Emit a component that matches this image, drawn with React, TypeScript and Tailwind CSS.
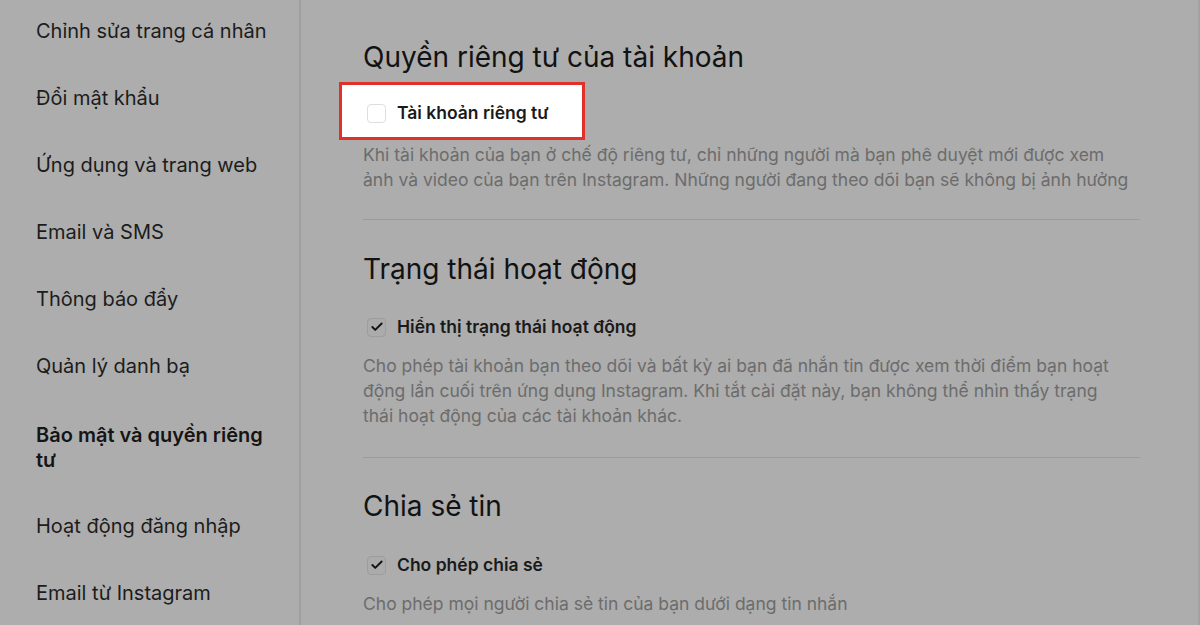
import { Check } from "lucide-react";

const menuItems = [
  { label: "Chỉnh sửa trang cá nhân" },
  { label: "Đổi mật khẩu" },
  { label: "Ứng dụng và trang web" },
  { label: "Email và SMS" },
  { label: "Thông báo đẩy" },
  { label: "Quản lý danh bạ" },
  { label: "Bảo mật và quyền riêng tư", active: true },
  { label: "Hoạt động đăng nhập" },
  { label: "Email từ Instagram" },
];

const Checkbox = ({ checked }: { checked: boolean }) => (
  <span
    className={
      checked
        ? "w-[19px] h-[19px] rounded-[4px] border border-[#9d9d9d] bg-[#ababab] flex items-center justify-center"
        : "w-[19px] h-[19px] rounded-[4px] border border-[#dedede] bg-white flex items-center justify-center"
    }
  >
    {checked && <Check className="w-[14px] h-[14px] text-[#111]" strokeWidth={3.2} />}
  </span>
);

const App = () => {
  return (
    <div className="w-[1200px] h-[625px] overflow-hidden flex bg-[#adadad] font-['Inter','Noto_Sans',sans-serif]">
      <aside className="w-[301px] shrink-0 border-r-2 border-[#9f9f9f] pl-9 pr-6 pt-[19px]">
        <ul className="flex flex-col">
          {menuItems.map((item) => (
            <li
              key={item.label}
              className={
                item.active
                  ? "text-[20px] leading-[25px] text-[#151515] font-semibold w-[240px] h-[93px] pt-[2px]"
                  : "text-[20px] leading-[25px] text-[#1c1c1c] w-[240px] h-[67px]"
              }
            >
              {item.label}
            </li>
          ))}
        </ul>
      </aside>

      <main className="flex-1 border-r-2 border-[#a2a2a2] pl-[62px] pr-[58px] pt-[38px]">
        <h2 className="text-[28px] leading-[38px] text-[#121212]">Quyền riêng tư của tài khoản</h2>
        <div className="-ml-[24px] mt-[6px] w-[246px] h-[58px] border-[3px] border-[#e0302a] bg-white flex items-center gap-[11px] pl-[25px] pt-[5px]">
          <Checkbox checked={false} />
          <span className="text-[17.5px] font-semibold text-[#1a1a1a]">Tài khoản riêng tư</span>
        </div>
        <p className="mt-[2px] text-[17.5px] leading-[25px] text-[#6c6c6c] whitespace-nowrap">
          Khi tài khoản của bạn ở chế độ riêng tư, chỉ những người mà bạn phê duyệt mới được xem
          <br />
          ảnh và video của bạn trên Instagram. Những người đang theo dõi bạn sẽ không bị ảnh hưởng
        </p>
        <hr className="mt-[27px] border-t border-[#9b9b9b]" />

        <h2 className="mt-[30px] text-[28px] leading-[38px] text-[#121212]">Trạng thái hoạt động</h2>
        <label className="mt-[26px] flex items-center gap-[11px] pl-[4px]">
          <Checkbox checked />
          <span className="text-[17.5px] font-semibold text-[#1a1a1a]">Hiển thị trạng thái hoạt động</span>
        </label>
        <p className="mt-[13px] text-[17.5px] leading-[25px] text-[#6c6c6c] whitespace-nowrap">
          Cho phép tài khoản bạn theo dõi và bất kỳ ai bạn đã nhắn tin được xem thời điểm bạn hoạt
          <br />
          động lần cuối trên ứng dụng Instagram. Khi tắt cài đặt này, bạn không thể nhìn thấy trạng
          <br />
          thái hoạt động của các tài khoản khác.
        </p>
        <hr className="mt-[29px] border-t border-[#9b9b9b]" />

        <h2 className="mt-[29px] text-[28px] leading-[38px] text-[#121212]">Chia sẻ tin</h2>
        <label className="mt-[27px] flex items-center gap-[11px] pl-[4px]">
          <Checkbox checked />
          <span className="text-[17.5px] font-semibold text-[#1a1a1a]">Cho phép chia sẻ</span>
        </label>
        <p className="mt-[12px] text-[17.5px] leading-[25px] text-[#6c6c6c] whitespace-nowrap">
          Cho phép mọi người chia sẻ tin của bạn dưới dạng tin nhắn
        </p>
      </main>
    </div>
  );
};

export default App;
